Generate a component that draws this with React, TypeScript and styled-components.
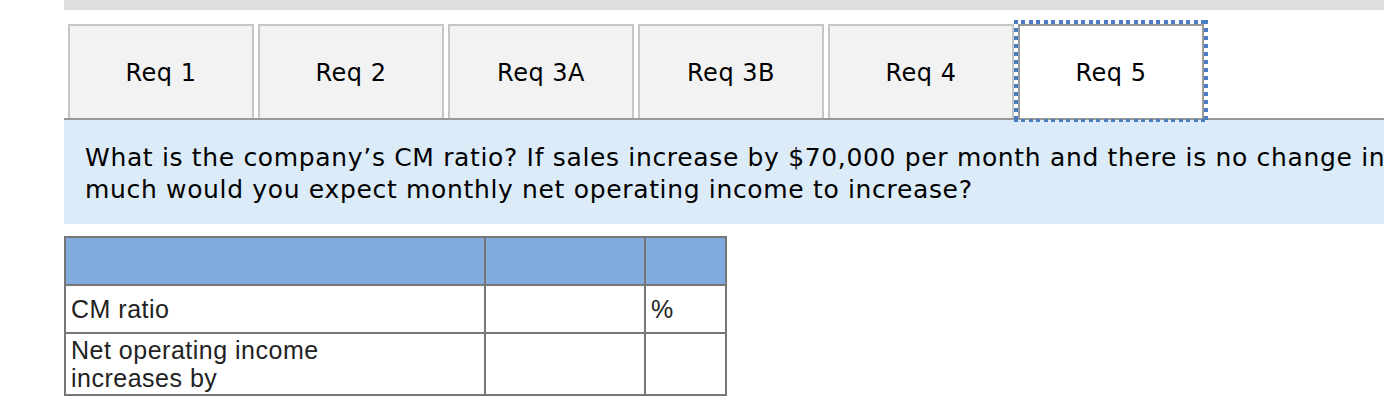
import React, { useState } from 'react'
import styled, { createGlobalStyle, css } from 'styled-components'

const TABS = ['Req 1', 'Req 2', 'Req 3A', 'Req 3B', 'Req 4', 'Req 5']

const GlobalStyle = createGlobalStyle`
  html, body {
    margin: 0;
    padding: 0;
    background: #fff;
    overflow: hidden;
  }
`

const Page = styled.div`
  padding-left: 64px;
  width: 1320px;
  overflow: hidden;
`

const TopBar = styled.div`
  height: 10px;
  background: #dedede;
`

const TabList = styled.div`
  display: flex;
  gap: 4px;
  margin-top: 14px;
  padding-left: 4px;
  border-bottom: 2px solid #999;
`

const Tab = styled.button<{ $active?: boolean }>`
  position: relative;
  width: 186px;
  height: 94px;
  box-sizing: border-box;
  display: flex;
  align-items: center;
  justify-content: center;
  padding: 2px 0 0;
  margin: 0;
  border: 2px solid #c6c6c6;
  border-bottom: none;
  background: #f2f2f2;
  font-family: 'DejaVu Sans', Verdana, sans-serif;
  font-size: 24px;
  letter-spacing: 0.5px;
  color: #000;
  cursor: pointer;
  outline: none;

  ${(p) =>
    p.$active &&
    css`
      background: #fff;
      border-color: #999;
      z-index: 1;

      &::after {
        content: '';
        position: absolute;
        top: -6px;
        left: -6px;
        right: -6px;
        bottom: -4px;
        pointer-events: none;
        background:
          repeating-linear-gradient(90deg, #4c7dc3 0 4px, transparent 4px 7.5px) top / 100% 4px no-repeat,
          repeating-linear-gradient(90deg, #4c7dc3 0 4px, transparent 4px 7.5px) bottom / 100% 3px no-repeat,
          repeating-linear-gradient(180deg, #4c7dc3 0 4px, transparent 4px 8px) left / 4px 100% no-repeat,
          repeating-linear-gradient(180deg, #4c7dc3 0 4px, transparent 4px 8px) right / 4px 100% no-repeat;
      }
    `}
`

const Question = styled.div`
  background: #dcebf8;
  padding: 22px 0 18px 21px;
  font-family: 'DejaVu Sans', Verdana, sans-serif;
  font-size: 25px;
  letter-spacing: 0.66px;
  line-height: 32px;
  color: #000;
  white-space: nowrap;
`

const Grid = styled.table`
  margin-top: 12px;
  border-collapse: separate;
  border-spacing: 0;
  table-layout: fixed;
  width: 663px;
  border-top: 2px solid #777;
  border-left: 2px solid #777;
  font-family: 'Liberation Sans', Arial, sans-serif;
  font-size: 25px;
  letter-spacing: 0.5px;
  line-height: 28px;
  color: #222;
`

const HeadCell = styled.th`
  height: 46px;
  padding: 0;
  background: #82abdf;
  border-right: 2px solid #777;
  border-bottom: 2px solid #777;
`

const Cell = styled.td<{ $h: number }>`
  height: ${(p) => p.$h}px;
  box-sizing: content-box;
  padding: 0 4px 0 5px;
  vertical-align: middle;
  border-right: 2px solid #777;
  border-bottom: 2px solid #777;
`

const App = () => {
  const [active, setActive] = useState(5)

  return (
    <Page>
      <GlobalStyle />
      <TopBar />
      <TabList>
        {TABS.map((label, i) => (
          <Tab key={label} $active={i === active} onClick={() => setActive(i)}>
            {label}
          </Tab>
        ))}
      </TabList>
      <Question>
        What is the company’s CM ratio? If sales increase by $70,000 per month and there is no change in fixed
        expenses, how
        <br />
        much would you expect monthly net operating income to increase?
      </Question>
      <Grid>
        <colgroup>
          <col style={{ width: 420 }} />
          <col style={{ width: 160 }} />
          <col style={{ width: 81 }} />
        </colgroup>
        <thead>
          <tr>
            <HeadCell />
            <HeadCell />
            <HeadCell />
          </tr>
        </thead>
        <tbody>
          <tr>
            <Cell $h={46}>CM ratio</Cell>
            <Cell $h={46} />
            <Cell $h={46}>%</Cell>
          </tr>
          <tr>
            <Cell $h={60}>
              Net operating income
              <br />
              increases by
            </Cell>
            <Cell $h={60} />
            <Cell $h={60} />
          </tr>
        </tbody>
      </Grid>
    </Page>
  )
}

export default App
